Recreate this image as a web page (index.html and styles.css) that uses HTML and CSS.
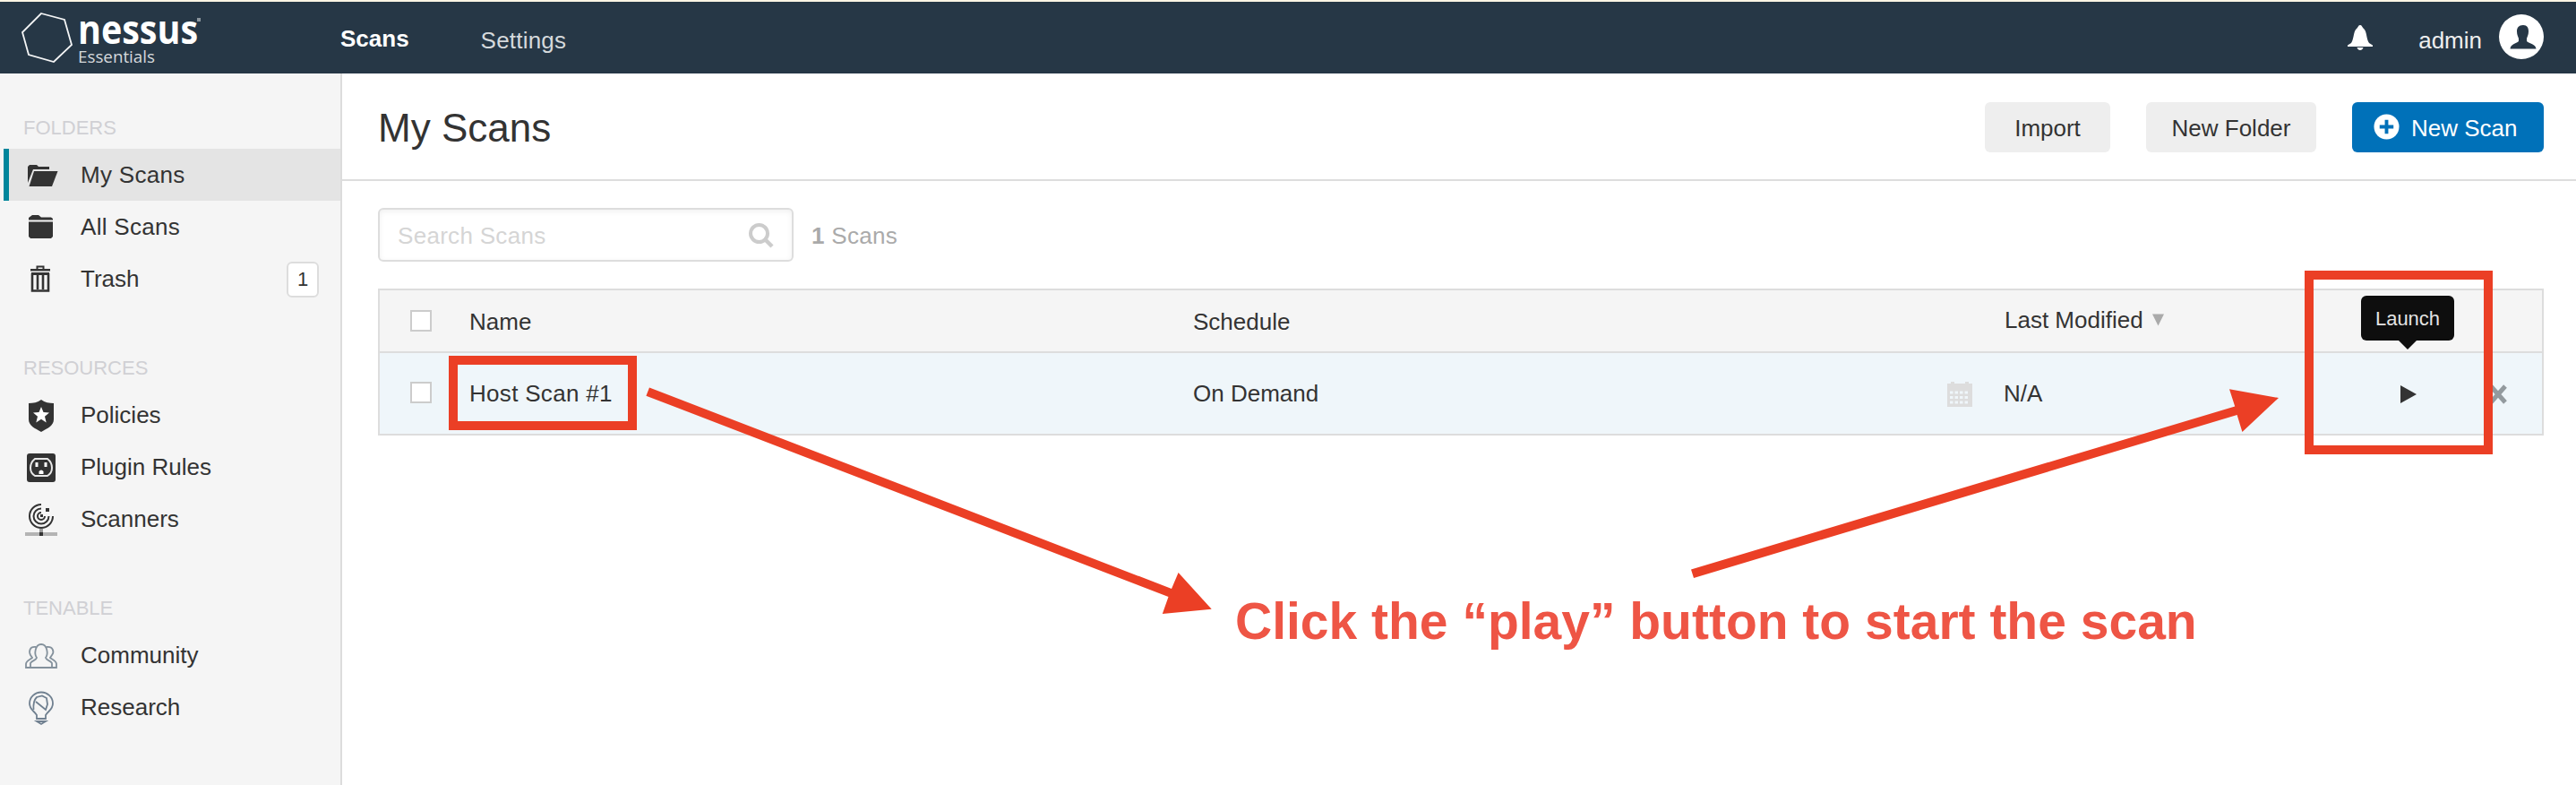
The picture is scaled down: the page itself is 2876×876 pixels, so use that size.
FILE: index.html
```html
<!DOCTYPE html>
<html lang="en">
<head>
<meta charset="utf-8">
<title>Nessus Essentials / My Scans</title>
<link rel="stylesheet" href="styles.css">
</head>
<body>
<header class="topbar">
  <svg class="logo" width="260" height="80" viewBox="0 2 260 80">
    <path d="M46 15L72 22L80 50L60 69L32 61L25 36Z" fill="none" stroke="#f4f5f6" stroke-width="1.800"/>
    <text class="logo-name" x="87" y="48.5" textLength="134" lengthAdjust="spacingAndGlyphs">nessus</text>
    <text class="logo-sub" x="87" y="70" textLength="86" lengthAdjust="spacingAndGlyphs">Essentials</text>
    <rect x="220" y="20" width="4" height="4" fill="#8b959d"/>
  </svg>
  <nav class="nav">
    <a class="nav-link nav-active">Scans</a>
    <a class="nav-link">Settings</a>
  </nav>
  <div class="account">
    <svg class="bell" width="28" height="28" viewBox="0 0 28 28"><path d="M14 0c2 0 2 2 3.500 3.500C22 7 20.500 15 24 20L28 22.500V24H0v-1.500L4 20C7.500 15 6 7 10.500 3.500C12 2 12 0 14 0ZM10.500 25h7q-1 3-3.500 3t-3.500-3Z" fill="#fff"/></svg>
    <span class="user">admin</span>
    <svg class="avatar" width="50" height="50" viewBox="0 0 50 50"><circle cx="25" cy="25" r="25" fill="#fff"/><path d="M27 12c4.500 0 6 3 6 7 0 4-1.500 6-2 8v3c3 3 10 3 10.500 8.500H12.500c.5-5.500 6.500-5.500 9.500-8.500v-3c-.5-2-2-4-2-8 0-4 2-7 7-7Z" fill="#263746"/></svg>
  </div>
</header>
<div class="body">
  <aside class="sidebar">
    <section class="group">
      <h2 class="group-title">FOLDERS</h2>
      <a class="item item-active"><svg class="icon" width="36" height="36" viewBox="0 0 36 36"><path d="M1 27V9l2-2h8l2 2h12v3H7Z" fill="#333"/><path d="M8 14H34.500L28 31H2.500Z" fill="#333"/></svg><span class="wide">My Scans</span></a>
      <a class="item"><svg class="icon" width="36" height="36" viewBox="0 0 36 36"><path d="M2 10.500V8l4-3h7l3 2.500h11l2 1.500v1.500ZM2 12.500H29V29l-2 2H4l-2-2Z" fill="#333"/></svg><span class="wide">All Scans</span></a>
      <a class="item"><svg class="icon" width="36" height="36" viewBox="0 0 36 36"><path d="M11.500 8V4.500h7V8" fill="none" stroke="#333" stroke-width="2"/><path d="M4 7H26V9.500H4ZM5 11H25V14H5Z" fill="#333"/><path d="M6 12V31.500H24V12M12 12V30M18 12V30" fill="none" stroke="#333" stroke-width="2.600"/></svg><span>Trash</span><b class="count">1</b></a>
    </section>
    <section class="group">
      <h2 class="group-title">RESOURCES</h2>
      <a class="item"><svg class="icon" width="36" height="36" viewBox="0 -1 36 36"><path d="M16 0C20 3 25 4 30 4V22C30 29 23 32 16 36C9 32 2 29 2 22V4C7 4 12 3 16 0Z" fill="#333"/><path d="M16 8l2.500 6 6.500.5-5 4.300 1.700 6.700-5.700-3.700-5.700 3.700L12 18.800l-5-4.300 6.500-.5Z" fill="#fff"/></svg><span>Policies</span></a>
      <a class="item"><svg class="icon" width="36" height="36" viewBox="0 -1 36 36"><rect x="0" y="2" width="32" height="32" rx="3" fill="#333"/><path d="M9 8h14q5 4 5 10t-5 9H9q-5-3-5-9T9 8Z" fill="#333" stroke="#e8e8e8" stroke-width="2"/><path d="M11 12v5M21 12v5" stroke="#fff" stroke-width="3"/><path d="M13.500 25v-3q2.500-3 5 0v3Z" fill="#fff"/></svg><span>Plugin Rules</span></a>
      <a class="item"><svg class="icon" width="36" height="36" viewBox="0 -1 36 36"><g fill="none" stroke="#333" stroke-width="2"><path d="M16 1A13 13 0 1 0 29 14M16 5.500A8.500 8.500 0 1 0 24.500 14M16 10A4 4 0 1 0 20 14"/></g><path d="M16 28V33" stroke="#999" stroke-width="4"/><path d="M21 5h4v4h-4ZM15 12h3v3h-3Z" fill="#333"/><path d="M-2 34H34" stroke="#b4b4b4" stroke-width="4"/><path d="M14 34h4" stroke="#333" stroke-width="4"/></svg><span>Scanners</span></a>
    </section>
    <section class="group group-last">
      <h2 class="group-title">TENABLE</h2>
      <a class="item"><svg class="icon" width="36" height="36" viewBox="0 -1 36 36"><g fill="none" stroke="#84919c" stroke-width="1.800"><path d="M4 31V26C6 23 10 23 11 20C8 16 9 5 16 5S24 16 21 20C22 23 26 23 28 26V31Z"/><path d="M10 8C3 7 2 13 4 17l2 3C4 22-1 23-1 27v4H4M22 8C29 7 31 13 28 17l-2 3C28 22 33 23 33 27v4H28"/></g></svg><span>Community</span></a>
      <a class="item"><svg class="icon" width="36" height="36" viewBox="0 -1 36 36"><g fill="none" stroke="#708090" stroke-width="1.800"><path d="M11 30V26C8 21 3 20 3 13A13 12.500 0 0 1 29 13C29 20 24 21 21 26V30ZM11 33h10l-5 3Z"/><path d="M7.500 20C7 14 8 9 11 6L17 4.500L22 7L23 14L21 20L10 11"/></g></svg><span>Research</span></a>
    </section>
  </aside>
  <main class="main">
    <div class="page-head">
      <h1 class="title">My Scans</h1>
      <div class="actions">
        <button class="btn btn-import">Import</button>
        <button class="btn btn-folder">New Folder</button>
        <button class="btn btn-new"><svg class="plus" width="29" height="29" viewBox="0 0 30 30"><circle cx="15" cy="15" r="14.500" fill="#fff"/><path d="M15 7V23M7 15H23" stroke="#0071b9" stroke-width="4"/></svg><span>New Scan</span></button>
      </div>
    </div>
    <div class="content">
      <div class="filter">
        <div class="search"><span class="wide">Search Scans</span><svg width="28" height="28" viewBox="0 0 28 28"><circle cx="11.500" cy="11.500" r="9.500" fill="none" stroke="#ccc" stroke-width="4"/><path d="M19 19L26 26" stroke="#ccc" stroke-width="4.500"/></svg></div>
        <div class="total wide"><b>1</b> Scans</div>
      </div>
      <div class="table">
        <div class="row row-head">
          <i class="check"></i><span class="col-name">Name</span><span class="col-schedule">Schedule</span>
          <span class="col-modified modified-head">Last Modified<svg class="sort" width="13" height="14" viewBox="0 0 14 14"><path d="M0 0H14L7 14Z" fill="#aaa"/></svg></span>
        </div>
        <div class="row row-scan">
          <i class="check"></i><span class="col-name wide">Host Scan #1</span><span class="col-schedule">On Demand</span>
          <svg class="calendar" width="28" height="28" viewBox="0 0 28 28"><path d="M0 2H4V0H8V2H20V0H24V2H28V28H0Z" fill="#ddd"/><path d="M3 12H25M3 17.500H25M3 23H25" stroke="#eff6fa" stroke-width="3" stroke-dasharray="3.500 2"/></svg>
          <span class="col-modified">N/A</span>
          <span class="launch"><svg width="18" height="20" viewBox="0 0 18 20"><path d="M0 0L18 10L0 20Z" fill="#333"/></svg><span class="tooltip">Launch</span></span>
          <svg class="remove" width="20" height="20" viewBox="0 0 20 20"><path d="M2 1L18 19M18 1L2 19" stroke="#939a9e" stroke-width="5"/></svg>
        </div>
      </div>
    </div>
  </main>
</div>
<div class="mark mark-name"></div>
<div class="mark mark-launch"></div>
<svg class="arrows" width="2876" height="876" viewBox="0 0 2876 876"><g fill="#eb3f25"><path d="M725 432.500L1308 657L1315.600 639L1352.700 679.700L1297.800 685L1304.500 666L721.400 441.700Z"/><path d="M1888 635.500L2495.200 453.500L2489 434.300L2544 444L2503.400 482L2497.600 463L1891 645Z"/></g></svg>
<p class="caption">Click the “play” button to start the scan</p>
</body>
</html>
```
FILE: styles.css
```css
* { box-sizing: border-box; }
html { overflow: hidden; }
body {
  margin: 0;
  width: 2876px;
  height: 876px;
  overflow: hidden;
  position: relative;
  background: #fff;
  color: #333;
  font: 26px/30px "Liberation Sans", Arial, sans-serif;
}
h1, h2, p { margin: 0; font-weight: normal; }
svg { display: block; flex: none; overflow: visible; }
.wide { letter-spacing: 0.3px; }

.topbar {
  height: 82px;
  border-top: 2px solid #fbf5e4;
  background: #263746;
  display: flex;
  padding-right: 36px;
}
.logo-name { font: 700 44px "Open Sans", sans-serif; fill: #fff; }
.logo-sub { font: 19px "Open Sans", sans-serif; fill: #d5d9dc; }
.nav { display: flex; gap: 80px; padding: 26px 0 0 120px; }
.nav-link { padding-top: 2px; color: #d5d9dc; letter-spacing: 0.2px; }
.nav-active { padding-top: 0; font-weight: bold; color: #fff; letter-spacing: 0; }
.account { margin-left: auto; display: flex; color: #eee; }
.bell { margin: 26px 51px 0 0; }
.user { margin: 28px 19px 0 0; }
.avatar { margin-top: 14px; }

.body { display: flex; height: 794px; }
.sidebar { width: 382px; background: #f5f5f5; border-right: 2px solid #dcdcdc; padding-top: 48px; }
.group { height: 268px; }
.group-last { height: 210px; }
.group-title { height: 36px; padding-left: 26px; font-size: 22px; line-height: 26px; color: #d0d0d4; }
.item { display: flex; align-items: center; height: 58px; margin-left: 4px; padding-left: 26px; border-left: 0 solid #00859b; }
.item-active { background: #e4e4e4; border-left-width: 6px; padding-left: 20px; }
.icon { margin-right: 24px; }
.count {
  margin: 2px 24px 0 auto;
  width: 36px;
  height: 40px;
  border: 2px solid #ddd;
  border-radius: 6px;
  background: #fff;
  font: 22px/36px "Liberation Sans", Arial, sans-serif;
  text-align: center;
}

.main { flex: 1; }
.page-head { height: 120px; border-bottom: 2px solid #ddd; padding: 32px 36px 0 40px; display: flex; justify-content: space-between; }
.title { font-size: 44px; line-height: 50px; margin-top: 4px; }
.actions { display: flex; gap: 40px; }
.btn { height: 56px; border: 0; border-radius: 6px; padding: 2px 0 0; background: #eee; color: #333; font: inherit; }
.btn-import { width: 140px; }
.btn-folder { width: 190px; }
.btn-new { width: 214px; background: #0071b9; color: #fff; display: flex; align-items: center; padding-left: 24px; }
.plus { margin: -4px 13px 0 0; }

.content { padding: 30px 36px 0 40px; }
.filter { display: flex; align-items: center; }
.search {
  width: 464px;
  height: 60px;
  border: 2px solid #ddd;
  border-radius: 6px;
  box-shadow: inset 0 2px 6px #f0f0f0;
  display: flex;
  align-items: center;
  justify-content: space-between;
  padding: 1px 20px 0;
  color: #d5d5d5;
}
.total { margin: 2px 0 0 20px; color: #aaa; }
.table { margin-top: 30px; border: 2px solid #ddd; }
.row { display: flex; align-items: center; padding-left: 34px; }
.row-head { height: 70px; background: #f5f5f5; border-bottom: 2px solid #ddd; padding-top: 2px; }
.row-scan { height: 90px; background: #eff6fa; }
.check { width: 24px; height: 24px; border: 2px solid #ccc; background: #fff; }
.row-head .check { margin-top: -2px; }
.row-scan .check { margin-top: -2px; }
.col-name { width: 808px; margin-left: 42px; }
.col-schedule { width: 843px; }
.row-head .col-schedule { width: 906px; }
.modified-head { display: flex; align-items: center; margin-top: -4px; }
.sort { margin-left: 10px; }
.calendar { margin: 2px 35px 0 -1px; }
.col-modified { width: 443px; }
.launch { position: relative; width: 18px; margin-top: 2px; }
.tooltip {
  position: absolute;
  left: -44px;
  bottom: 70px;
  width: 104px;
  height: 50px;
  border-radius: 6px;
  background: #0e0e0e;
  color: #e4e4e4;
  font-size: 22px;
  line-height: 52px;
  text-align: center;
}
.tooltip::after { content: ""; position: absolute; left: 42px; top: 50px; border: 10px solid transparent; border-top-color: #0e0e0e; border-bottom: 0; }
.remove { margin: 2px 0 0 81px; }

.mark { position: absolute; border: 10px solid #eb3f25; }
.mark-name { left: 501px; top: 397px; width: 210px; height: 83px; }
.mark-launch { left: 2573px; top: 302px; width: 210px; height: 205px; }
.arrows { position: absolute; left: 0; top: 0; }
.caption { position: absolute; left: 1379px; top: 660px; font: bold 57px/66px "Liberation Sans", Arial, sans-serif; color: #ee5545; white-space: nowrap; }
```
